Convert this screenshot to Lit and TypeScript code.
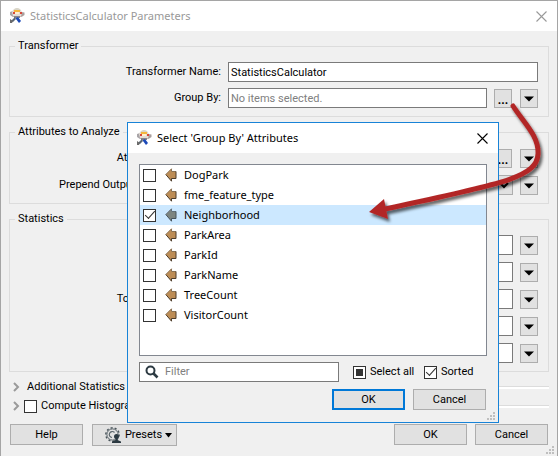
import { LitElement, html, css, nothing } from "lit";
import { customElement, state } from "lit/decorators.js";

const mascot = html`<svg class="mascot" width="16" height="16" viewBox="0 0 16 16" aria-hidden="true">
  <path d="M1 4l3-1 2 3-2 3-3-2z" fill="#a9a5a8"></path>
  <path d="M15.500 4.500l-3-.5-2 3 2 2 3-2z" fill="#a99f9d"></path>
  <path d="M3 4Q4 .5 8 .5T13 4.500L12 8H4z" fill="#e4dcd4"></path>
  <path d="M4 3Q5 0 8 0T12 3z" fill="#d9d5c8"></path>
  <path d="M5 2h6v2H5z" fill="#f5b63c"></path>
  <path d="M4 4h2v2H4zM11 4h2v2h-2z" fill="#d8473a"></path>
  <path d="M6 4h4v2H6z" fill="#fff0d0"></path>
  <path d="M4 8h8l-1 1H5z" fill="#9b7d73"></path>
  <path d="M5 8h6v2H5z" fill="#87858b"></path>
  <path d="M7 10l2-1 3 4-2 2-3-4z" fill="#1b49b8"></path>
  <path d="M6 9l1 2-3 3-2-1z" fill="#5a6775"></path>
  <path d="M1 11l3 2-1 2H1z" fill="#6b6b6b"></path>
</svg>`;

const cross = html`<svg width="11" height="11" viewBox="0 0 11 11" aria-hidden="true">
  <path d="M.5 .5l10 10M10.500 .5l-10 10" fill="none" stroke="currentColor" stroke-width="1.100"></path>
</svg>`;

const caret = html`<svg width="10" height="6" viewBox="0 0 10 6" aria-hidden="true">
  <path d="M0 .5h10L5 5.500z" fill="#000"></path>
</svg>`;

const chevron = html`<svg width="7" height="10" viewBox="0 0 7 10" aria-hidden="true">
  <path d="M1 1l4 4-4 4" fill="none" stroke="#9a9a9a" stroke-width="2"></path>
</svg>`;

const grip = html`<svg class="grip" width="8" height="8" viewBox="0 0 8 8" aria-hidden="true">
  <path d="M6 0h2v2H6zM3 3h2v2H3zM6 3h2v2H6zM0 6h2v2H0zM3 6h2v2H3zM6 6h2v2H6z" fill="#bfbfbf"></path>
</svg>`;

const attributeIcon = (selected: boolean) => html`<svg width="12" height="14" viewBox="0 0 12 14" aria-hidden="true">
  <path d="M.8 6.500L6.500 .8v2.700h4.500v7H6.500v2.700z" fill=${selected ? "#7d8580" : "#bd8d56"}></path>
  <path d="M.8 6.500L6.500 .8v2.700h4.500" fill="none" stroke=${selected ? "#647078" : "#8b7355"}></path>
  <path d="M11 3.500v7H6.500v2.700L.8 6.500" fill="none" stroke=${selected ? "#47545c" : "#4d3d2b"}></path>
</svg>`;

const sharedStyles = css`
  * { box-sizing: border-box; }
  svg { display: block; flex: none; }
  button, input, select { font: inherit; color: inherit; margin: 0; border-radius: 0; }
  button { padding: 0; background: #e1e1e1; border: 1px solid #adadad; }
  .titlebar {
    display: flex; align-items: center; gap: 5px; height: 30px; padding: 0 10px 0 8px;
    background: #fff; font: 11px/16px "Noto Sans", sans-serif;
  }
  .title { flex: 1; margin: 0; font: inherit; }
  .close { display: grid; place-items: center; width: 11px; height: 20px; background: none; border: 0; }
  .command { width: 73px; height: 21px; text-align: center; }
  .box {
    appearance: none; flex: none; width: 13px; height: 13px; background: #fff;
    border: 1px solid #333; display: grid; place-items: center;
  }
  .box:checked::before {
    content: ""; width: 9px; height: 4px; margin-top: -3px;
    border: solid #333; border-width: 0 0 1px 1px; transform: rotate(-48deg);
  }
  .box:indeterminate::before {
    content: ""; width: 7px; height: 7px; margin: 0; border: 0; background: #333; transform: none;
  }
`;

@customElement("attribute-dialog")
class AttributeDialog extends LitElement {
  @state() private names = [
    "DogPark", "fme_feature_type", "Neighborhood", "ParkArea",
    "ParkId", "ParkName", "TreeCount", "VisitorCount",
  ];
  @state() private picked = new Set(["Neighborhood"]);

  static styles = [sharedStyles, css`
    :host { display: flex; flex-direction: column; border: 1px solid #1883d7; background: #f0f0f0; }
    .body { flex: 1; display: flex; flex-direction: column; padding: 11px 11px 12px; }
    .list {
      flex: 1; min-height: 192px; margin: 0; padding: 0; list-style: none;
      background: #fff; border: 1px solid #828790; font: 11px/20px "Noto Sans", sans-serif;
    }
    .item { display: flex; align-items: center; height: 20px; padding-left: 3px; }
    .item.selected { background: #cce8ff; }
    .item label { display: flex; align-items: center; gap: 7px; padding-left: 9px; }
    .tools { display: flex; align-items: center; margin-top: 6px; }
    .filter {
      display: flex; align-items: center; gap: 6px; width: 200px; height: 20px;
      padding-left: 5px; background: #fff; border: 1px solid #7a7a7a;
    }
    .filter input { flex: 1; min-width: 0; padding: 0; border: 0; outline: 0; background: none; }
    .filter input::placeholder { color: #808080; opacity: 1; }
    .tick { display: flex; align-items: center; gap: 4px; white-space: nowrap; }
    .all { width: 71px; margin-left: 14px; }
    .actions { display: flex; justify-content: flex-end; gap: 8px; margin-top: 7px; padding-right: 1px; }
    .default { border: 2px solid #0078d7; }
    .grip { position: absolute; right: 3px; bottom: 2px; }
  `];

  private toggle(name: string) {
    const next = new Set(this.picked);
    next.has(name) ? next.delete(name) : next.add(name);
    this.picked = next;
  }

  render() {
    return html`
      <header class="titlebar">
        ${mascot}
        <h2 class="title">Select 'Group By' Attributes</h2>
        <button class="close" aria-label="Close">${cross}</button>
      </header>
      <div class="body">
        <ul class="list">
          ${this.names.map((name) => {
            const on = this.picked.has(name);
            return html`<li class="item ${on ? "selected" : ""}">
              <input class="box" type="checkbox" id=${name} .checked=${on} @change=${() => this.toggle(name)}>
              <label for=${name}>${attributeIcon(on)}${name}</label>
            </li>`;
          })}
        </ul>
        <div class="tools">
          <label class="filter">
            <svg width="14" height="14" viewBox="0 0 14 14" aria-hidden="true">
              <circle cx="5.500" cy="5.500" r="4" fill="none" stroke="#2c3a42" stroke-width="2"></circle>
              <path d="M8.500 8.500L12.500 12.500" stroke="#2c3a42" stroke-width="2.600"></path>
            </svg>
            <input type="text" placeholder="Filter" aria-label="Filter">
          </label>
          <label class="tick all"><input class="box" type="checkbox" .indeterminate=${true}>Select all</label>
          <label class="tick"><input class="box" type="checkbox" checked>Sorted</label>
        </div>
        <div class="actions">
          <button class="command default">OK</button>
          <button class="command">Cancel</button>
        </div>
      </div>
      ${grip}
    `;
  }
}

@customElement("app-root")
class AppRoot extends LitElement {
  static styles = [sharedStyles, css`
    :host {
      display: block; position: relative; border: 1px solid #a5a5a5; background: #f0f0f0;
      color: #000; font: 11px/14px Roboto, sans-serif;
      box-sizing: border-box;
    }
    .titlebar .title, .titlebar .close { color: #999; }
    .form { padding: 8px 8px 0; }
    .group { margin: 0 0 8px; padding: 9px 10px 8px 0; border: 1px solid #dcdcdc; min-width: 0; }
    .group legend { margin-left: 5px; padding: 0 3px; height: 14px; }
    .rows { display: grid; gap: 6px; }
    .rows.spaced { gap: 7px; }
    .row { display: grid; grid-template-columns: 211px minmax(0, 1fr) auto; align-items: center; height: 20px; }
    .row > label { width: 211px; text-align: right; white-space: nowrap; }
    .field {
      grid-column: 2; margin-left: 7px; height: 20px; padding: 0 2px;
      background: #fff; border: 1px solid #7a7a7a; min-width: 0;
    }
    .field::placeholder { color: #808080; opacity: 1; }
    select.field { background: #e1e1e1; border-color: #adadad; }
    .buttons { display: flex; align-self: end; gap: 8px; padding-left: 7px; }
    .small { display: grid; place-items: center; width: 18px; height: 19px; }
    .browse { padding-top: 2px; font-weight: bold; font-size: 12px; }
    .foldouts { display: grid; gap: 5px; padding-left: 4px; }
    .foldout { display: flex; align-items: center; gap: 4px; height: 14px; white-space: nowrap; }
    .foldout::after { content: ""; flex: 1; height: 2px; border-top: 1px solid #dcdcdc; background: #fff; }
    .toggle { display: grid; width: 7px; border: 0; background: none; }
    .foldout .name { padding-left: 3px; }
    .footer { display: flex; gap: 8px; padding: 11px 9px 10px; }
    .presets {
      display: flex; align-items: center; justify-content: center; gap: 3px;
      width: 85px; height: 22px; margin-left: 1px; padding-left: 8px;
    }
    .spacer { flex: 1; }
    .grip { position: absolute; right: 3px; bottom: 2px; }
    attribute-dialog { position: absolute; left: 126px; top: 121px; width: 372px; height: 301px; }
    .pointer { position: absolute; left: -1px; top: -1px; pointer-events: none; }
  `];

  private more() {
    return html`<button class="small" aria-label="More options">${caret}</button>`;
  }

  private browse() {
    return html`<button class="small browse" aria-label="Choose attributes">...</button>`;
  }

  private row(id: string, label: string, control: unknown, buttons: unknown = nothing) {
    return html`<div class="row"><label for=${id}>${label}</label>${control}${buttons}</div>`;
  }

  private statRow(name: string) {
    return html`<div class="row">
      <input class="field" type="text" aria-label=${name}>
      <div class="buttons">${this.more()}</div>
    </div>`;
  }

  render() {
    return html`
      <header class="titlebar">
        ${mascot}
        <h1 class="title">StatisticsCalculator Parameters</h1>
        <button class="close" aria-label="Close">${cross}</button>
      </header>
      <main class="form">
        <fieldset class="group">
          <legend>Transformer</legend>
          <div class="rows">
            ${this.row("name", "Transformer Name:", html`<input class="field" id="name" type="text" value="StatisticsCalculator">`)}
            ${this.row("group-by", "Group By:",
              html`<input class="field" id="group-by" type="text" readonly placeholder="No items selected.">`,
              html`<div class="buttons">${this.browse()}${this.more()}</div>`)}
          </div>
        </fieldset>
        <fieldset class="group">
          <legend>Attributes to Analyze</legend>
          <div class="rows spaced">
            ${this.row("analyze", "Attributes to Analyze:",
              html`<input class="field" id="analyze" type="text">`,
              html`<div class="buttons">${this.browse()}${this.more()}</div>`)}
            ${this.row("prepend", "Prepend Output Attribute Names:",
              html`<select class="field" id="prepend"><option>No</option></select>`,
              html`<div class="buttons">${this.more()}</div>`)}
          </div>
        </fieldset>
        <fieldset class="group">
          <legend>Statistics</legend>
          <div class="rows spaced">
            ${this.statRow("Minimum")}
            ${this.statRow("Maximum")}
            ${this.row("total", "Total Count Attribute:",
              html`<input class="field" id="total" type="text">`,
              html`<div class="buttons">${this.more()}</div>`)}
            ${this.statRow("Sum")}
            ${this.statRow("Mean")}
          </div>
        </fieldset>
        <div class="foldouts">
          <div class="foldout">
            <button class="toggle" aria-label="Expand Additional Statistics">${chevron}</button>
            <span class="name">Additional Statistics</span>
          </div>
          <div class="foldout">
            <button class="toggle" aria-label="Expand Compute Histogram">${chevron}</button>
            <input class="box" type="checkbox" id="histogram">
            <label for="histogram">Compute Histogram</label>
          </div>
        </div>
      </main>
      <footer class="footer">
        <button class="command">Help</button>
        <button class="presets">
          <svg width="17" height="17" viewBox="0 0 17 17" aria-hidden="true">
            <circle cx="7.500" cy="7.500" r="5.600" fill="none" stroke="#5a656b" stroke-width="1"></circle>
            <circle cx="7.500" cy="7.500" r="6.700" fill="none" stroke="#4a555b" stroke-width="1.400" stroke-dasharray="2.100 2.100"></circle>
            <path d="M9.500 5.500A3 3 0 1 0 7 10.500" fill="none" stroke="#5a656b" stroke-width="1.200"></path>
            <circle cx="11.500" cy="9.500" r="2.500" fill="#2c3a42"></circle>
            <path d="M10.500 11h2v2l3.500 1.500V16H7v-1.500l3.500-1.500z" fill="#2c3a42"></path>
          </svg>
          Presets
          <svg width="7" height="5" viewBox="0 0 7 5" aria-hidden="true"><path d="M0 0h7L3.500 4.500z"></path></svg>
        </button>
        <span class="spacer"></span>
        <button class="command">OK</button>
        <button class="command">Cancel</button>
      </footer>
      ${grip}
      <attribute-dialog role="dialog" aria-label="Select 'Group By' Attributes"></attribute-dialog>
      <svg class="pointer" width="558" height="240" viewBox="0 0 558 240" aria-hidden="true">
        <defs>
          <filter id="shade" x="-10%" y="-10%" width="120%" height="130%">
            <feDropShadow dx="2" dy="3" stdDeviation="1.500" flood-color="#000" flood-opacity=".6"></feDropShadow>
          </filter>
        </defs>
        <g filter="url(#shade)">
          <path d="M513 106C524 123 539 136 538 154C537 178 500 184 385 209" fill="none" stroke="#b22828" stroke-width="5" stroke-linecap="round"></path>
          <path d="M369 212L384 199L388 219z" fill="#b22828"></path>
        </g>
      </svg>
    `;
  }
}
